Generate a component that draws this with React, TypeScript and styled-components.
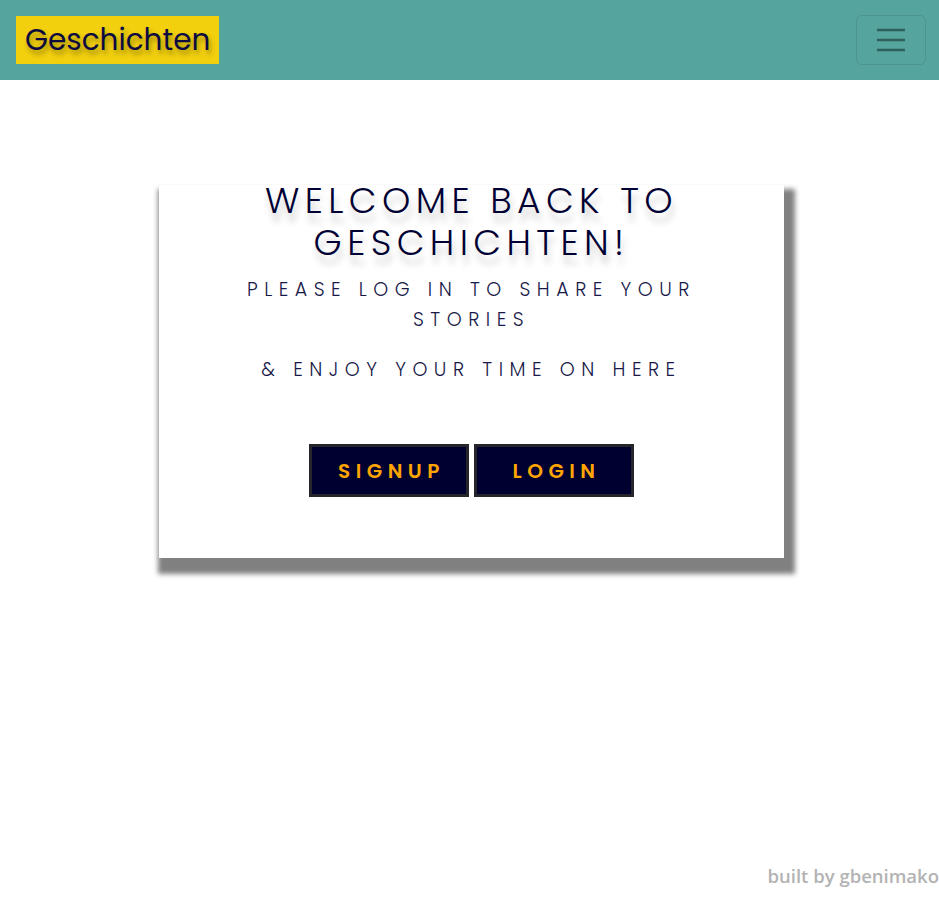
import * as React from 'react'
import styled, { createGlobalStyle } from 'styled-components'

const GlobalStyle = createGlobalStyle`
  html, body {
    margin: 0;
    padding: 0;
    background: #ffffff;
  }
  body {
    font-family: Poppins, Inter, "Noto Sans", sans-serif;
  }
`

const Page = styled.div`
  min-height: 100vh;
  display: flex;
  flex-direction: column;
`

const NavBar = styled.nav`
  height: 80px;
  background: #55a59e;
  display: flex;
  align-items: center;
  justify-content: space-between;
  padding: 0 13px 0 16px;
  box-sizing: border-box;
`

const Brand = styled.a`
  display: flex;
  align-items: center;
  height: 48px;
  padding: 0 9px;
  background: #f2d00e;
  color: #0d0a40;
  font-family: Poppins, Inter, sans-serif;
  font-size: 29.5px;
  font-weight: 400;
  text-shadow: 2px 4px 5px rgba(0, 0, 0, 0.35);
  text-decoration: none;
`

const Toggler = styled.button`
  width: 70px;
  height: 50px;
  border: 1px solid rgba(0, 0, 0, 0.1);
  border-radius: 6px;
  background: transparent;
  display: flex;
  align-items: center;
  justify-content: center;
  padding: 0;
`

const Main = styled.main`
  flex: 1;
  padding-top: 105px;
`

const Card = styled.section`
  width: 625px;
  margin-left: 159px;
  background: #ffffff;
  box-shadow: 5px 10px 5px 6px #808080;
  padding: 1px 0 61px;
  text-align: center;
  box-sizing: border-box;
`

const Title = styled.h1`
  margin: -6px 0 0;
  font-size: 36px;
  line-height: 42px;
  font-weight: 300;
  letter-spacing: 5.4px;
  color: #000033;
  text-shadow: 2px 9px 7px rgba(0, 0, 0, 0.2);
`

const Lead = styled.p<{ $gap?: number }>`
  margin: ${p => p.$gap ?? 0}px 0 0;
  font-size: 19px;
  line-height: 30px;
  font-weight: 300;
  letter-spacing: 6.5px;
  color: #1a1a4a;
`

const Actions = styled.div`
  display: flex;
  justify-content: center;
  gap: 5px;
  margin-top: 59px;
`

const ActionButton = styled.button`
  width: 160px;
  height: 53px;
  border: 3px solid #25252b;
  background: #000030;
  color: #ffa500;
  font-family: inherit;
  font-size: 20px;
  font-weight: 600;
  letter-spacing: 5.5px;
  padding: 0 0 0 5px;
  cursor: pointer;
`

const Footer = styled.footer`
  display: flex;
  justify-content: flex-end;
  padding: 0 0 14px;
  color: #b3b3b3;
  font-family: "Open Sans", "Noto Sans", sans-serif;
  font-size: 18.5px;
  font-weight: 600;
  line-height: 24px;
`

export default function App() {
  return (
    <Page>
      <GlobalStyle />
      <NavBar>
        <Brand href="#">Geschichten</Brand>
        <Toggler aria-label="Toggle navigation">
          <svg width="30" height="30" viewBox="0 0 30 30">
            <path
              d="M1 5h28M1 15h28M1 25h28"
              stroke="#2e5f5a"
              strokeWidth="2.5"
              strokeLinecap="butt"
            />
          </svg>
        </Toggler>
      </NavBar>

      <Main>
        <Card>
          <Title>
            WELCOME BACK TO
            <br />
            GESCHICHTEN!
          </Title>
          <Lead $gap={11}>
            PLEASE LOG IN TO SHARE YOUR
            <br />
            STORIES
          </Lead>
          <Lead $gap={20}>&amp; ENJOY YOUR TIME ON HERE</Lead>
          <Actions>
            <ActionButton>SIGNUP</ActionButton>
            <ActionButton>LOGIN</ActionButton>
          </Actions>
        </Card>
      </Main>

      <Footer>built by gbenimako</Footer>
    </Page>
  )
}
